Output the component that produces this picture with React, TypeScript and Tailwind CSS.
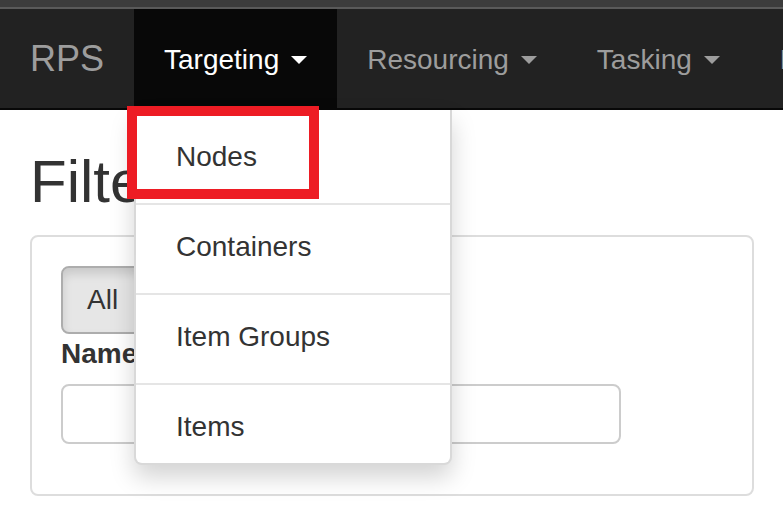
import React from "react";

const font = { fontFamily: '"Liberation Sans", Arial, sans-serif' };

function Caret({ active }: { active?: boolean }) {
  return (
    <span
      className={`ml-[12px] inline-block h-0 w-0 align-middle border-t-[8px] border-x-[8px] border-x-transparent ${
        active ? "border-t-white" : "border-t-[#9d9d9d]"
      }`}
    />
  );
}

function NavItem({ label, active }: { label: string; active?: boolean }) {
  return (
    <div
      className={`flex shrink-0 items-center px-[30px] pt-[31px] pb-[28px] text-[28px] leading-[40px] ${
        active ? "bg-[#080808] text-white" : "text-[#9d9d9d]"
      }`}
    >
      <span>{label}</span>
      <Caret active={active} />
    </div>
  );
}

const menu = ["Nodes", "Containers", "Item Groups", "Items"];

export default function App() {
  return (
    <div className="relative h-[518px] w-full overflow-hidden bg-white text-[#333]" style={font}>
      <div className="h-[7px] bg-[#3c3c3c]" />
      <div className="h-[2px] bg-[#5a5a5a]" />

      {/* navbar */}
      <nav className="flex overflow-hidden whitespace-nowrap border-b-2 border-[#080808] bg-[#222]">
        <div className="shrink-0 px-[30px] pt-[30px] pb-[29px] text-[36px] leading-[40px] text-[#9d9d9d]">RPS</div>
        <NavItem label="Targeting" active />
        <NavItem label="Resourcing" />
        <NavItem label="Tasking" />
        <div className="shrink-0 px-[30px] pt-[31px] pb-[28px] text-[28px] leading-[40px] text-[#9d9d9d]">Reports</div>
      </nav>

      {/* page */}
      <div className="px-[30px]">
        <h1 className="mt-[39px] text-[60px] font-normal leading-[66px]">Filters</h1>
        <div className="mt-[20px] w-[724px] rounded-[8px] border-2 border-[#ddd] px-[29px] pt-[29px] pb-[50px]">
          <div className="flex">
            <button className="rounded-[8px] border-2 border-[#adadad] bg-[#e6e6e6] px-[24px] py-[12px] text-[28px] leading-[40px] shadow-[inset_0_6px_10px_rgba(0,0,0,0.125)]">
              All
            </button>
            <button className="rounded-[8px] border-2 border-[#ccc] bg-white px-[24px] py-[12px] text-[28px] leading-[40px]">
              Active
            </button>
          </div>
          <label className="mb-[10px] block text-[28px] font-bold leading-[40px]">Name</label>
          <input className="block h-[60px] w-[560px] rounded-[8px] border-2 border-[#ccc] bg-white" />
        </div>
      </div>

      {/* open dropdown */}
      <div className="absolute left-[134px] top-[110px] w-[318px] rounded-b-[8px] border-2 border-t-0 border-[rgba(0,0,0,0.15)] bg-white pt-[5px] pb-[16px] shadow-[0_12px_24px_rgba(0,0,0,0.175)]">
        {menu.map((m, i) => (
          <div
            key={m}
            className={`px-[40px] pt-[22px] text-[28px] leading-[40px] text-[#333] ${
              i < menu.length - 1 ? "border-b-2 border-[#e5e5e5] pb-[26px]" : ""
            }`}
          >
            {m}
          </div>
        ))}
      </div>

      {/* highlight */}
      <div className="absolute left-[127px] top-[106px] h-[93px] w-[192px] border-[10px] border-[#ed1c24]" />
    </div>
  );
}
